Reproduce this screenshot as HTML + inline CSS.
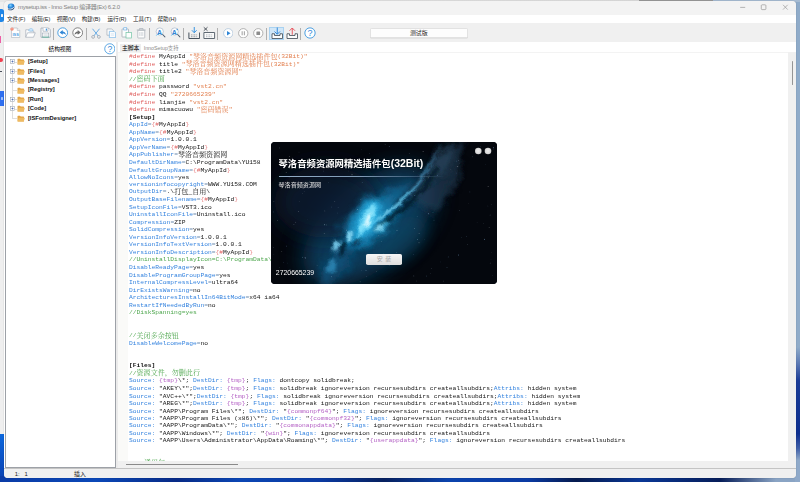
<!DOCTYPE html>
<html lang="zh-CN">
<head>
<meta charset="utf-8">
<title>mysetup.iss - Inno Setup 编译器(Ex) 6.2.0</title>
<style>
*{box-sizing:border-box;margin:0;padding:0}
html,body{width:800px;height:482px;overflow:hidden}
body{position:relative;background:#8fabc9;font-family:"Liberation Sans","Noto Sans CJK SC",sans-serif;color:#000}
.abs{position:absolute}
/* desktop / other windows peeking */
#desk-left{left:0;top:0;width:5px;height:434px;background:#efefef}
#desk-leftblue{left:0;top:434px;width:6px;height:48px;background:linear-gradient(180deg,#0b67dd 0%,#0a52c6 50%,#0a3fae 100%)}
#desk-bottom{left:0;top:476px;width:800px;height:6px;background:linear-gradient(90deg,#0a3ba6 0%,#0b48b8 12%,#072a86 22%,#0b46b4 30%,#0a3aa2 40%,#06205f 48%,#0b43ad 56%,#0a3aa3 66%,#051a4e 72%,#0a3796 80%,#061d59 90%,#8aa4c4 97%)}
#desk-right{left:795px;top:0;width:5px;height:482px;background:linear-gradient(180deg,#8fabc9 0%,#8fabc9 72%,#5a78b4 75.500%,#1a3c98 79%,#0d2f8f 90%,#3f5fa8 93%,#8fa9c9 95.500%,#8fa9c9 100%)}
#top-strip{left:0;top:0;width:800px;height:2px;background:linear-gradient(90deg,#e6e6e6 0,#dcdcdc 639px,#989898 639px,#989898 713px,#a6bbd2 713px)}
/* main window */
#win{left:4px;top:1px;width:792px;height:477px;background:#f0f0f0;border-radius:4px 4px 4px 4px;overflow:hidden;box-shadow:0 0 1px rgba(0,0,0,.35)}
#titlebar{left:0;top:0;width:792px;height:13.5px;background:#f3f3f3}
#title{left:14px;top:2.200px;font-size:6px;line-height:9px;color:#828282;white-space:nowrap;letter-spacing:-0.260px}
#menubar{left:0;top:13.5px;width:792px;height:8.7px;background:#fff}
.mi{position:absolute;top:1px;font-size:5.600px;line-height:7.5px;color:#222;white-space:nowrap}
#toolbar{left:0;top:22.2px;width:792px;height:18.8px;background:#f0f0f0}
.sep{position:absolute;top:4.500px;width:0.600px;height:12px;background:#b0b0b0}
.ico{position:absolute}

/* left panel */
#lp-title{left:0;top:41px;width:112.400px;height:14.500px;background:#fff;font-size:5.700px;line-height:14.500px;color:#000;font-weight:normal}
#lp-title span{position:absolute;left:44.500px;top:0}
#tree{left:1px;top:55.300px;width:110.900px;height:411.300px;background:#fff;border:0.600px solid #9da1a7}
#split{left:112.400px;top:41px;width:1.600px;height:426px;background:#ebebeb}
.ti{position:absolute;left:0;height:9.400px;width:108px;font-size:5.750px;line-height:9.400px;font-weight:bold;color:#111;white-space:nowrap}
.ti .lbl{position:absolute;left:21.900px;top:0}
.ti .fold{position:absolute;left:11.400px;top:1.200px}
.ti .plus{position:absolute;left:3.800px;top:2.200px}
.ti .hl{position:absolute;left:8.800px;top:4.500px;width:2.200px;height:0.400px;background:#dedede}
.ti .hl2{position:absolute;left:6.200px;top:4.500px;width:5.200px;height:0.400px;background:#dedede}
#vline{left:5.800px;top:8.600px;width:0.400px;height:52.500px;background:#dedede}
/* editor */
#tabrow{left:114px;top:41px;width:678px;height:10.300px;background:#fff}
#tab1{left:2px;top:1.700px;width:21.300px;height:8.600px;background:#eeeeee;font-size:5.800px;line-height:8.600px;text-align:center;color:#000;font-weight:normal}
#tab2{left:25.700px;top:1.700px;font-size:5.300px;line-height:8.600px;color:#8a8a8a;white-space:nowrap}
#editor{left:114px;top:51.300px;width:670px;height:408.500px;background:#fff;border-top:0.500px solid #f3f3f3;overflow:hidden}
#gutter{left:0;top:0;width:9.500px;height:409px;background:#fafaf8}
#code{left:11px;top:0.900px;font-family:"Liberation Mono","Noto Serif CJK SC",monospace;font-size:6.270px;line-height:8.976px;white-space:pre;color:#151515;transform:scaleY(0.84);transform-origin:0 0}
#code i{font-style:normal;font-size:7.050px;line-height:0;font-family:"Noto Serif CJK SC","Liberation Mono",monospace;display:inline-block;transform:scaleY(1.190);transform-origin:50% 0}
.d{color:#e0605f}.e{color:#6f8db0}.d2{color:#e77f80}.s{color:#e27f4e}.c{color:#4da64d}.k{color:#3483df}.p{color:#b35fc4}.b{font-weight:bold;color:#111}
#vsb{left:784px;top:51.300px;width:8px;height:409.500px;background:#f0f0f0}
#vsb div{position:absolute;left:3.500px;top:8.500px;width:1.500px;height:24px;background:#959595;border-radius:1px}
#hsb{left:114px;top:459.800px;width:678px;height:7.200px;background:#f0f0f0}
#hsb div{position:absolute;left:7.500px;top:2.800px;width:112px;height:1px;background:#8a8a8a}
/* status */
#status{left:0;top:466.800px;width:792px;height:10.200px;background:#f0f0f0;border-top:0.600px solid #c4c4c4;font-size:5.900px;line-height:10px;color:#222}
#status span{position:absolute;top:0.300px;white-space:pre}

/* splash dialog */
#dlg{left:271px;top:142px;width:225.500px;height:141.500px;border-radius:4px;overflow:hidden;background:#04070d}
#dlg svg.bg{position:absolute;left:0;top:0}
#dlg-title{left:7.500px;top:13px;font-family:"Liberation Sans","Noto Sans CJK SC",sans-serif;font-weight:bold;font-size:9.350px;line-height:16px;color:#fff;white-space:nowrap;text-shadow:0 0 1px rgba(0,0,0,.6)}
#dlg-title b{font-size:10.500px}
#dlg-line{left:7.500px;top:34px;width:166px;height:0.900px;background:linear-gradient(90deg,#93adc5 0%,#7f9bb6 50%,rgba(110,140,170,.5) 80%,rgba(110,140,170,0) 100%)}
#dlg-sub{left:7.500px;top:37.900px;font-size:6.100px;line-height:9px;color:#e6e6e6;white-space:nowrap}
#dlg-qq{left:4.800px;top:126px;font-size:6.900px;line-height:10px;color:#fff;white-space:nowrap}
#dlg-btn{left:94.600px;top:112px;width:36.600px;height:11.200px;border-radius:1.800px;background:linear-gradient(180deg,#f6f6f6,#dedede);text-align:center;font-size:6px;line-height:11px;color:#a9a9a9;letter-spacing:2.500px;text-indent:2.500px}
.dot{position:absolute;top:5.400px;width:6.400px;height:6.400px;border-radius:50%;background:#d9d9d9;box-shadow:inset 0 0 1px #aaa}
</style>
</head>
<body>
<div class="abs" id="desk-left"></div>
<div class="abs" style="left:-3px;top:9px;width:6.700px;height:12.500px;border-radius:2.500px;background:#1e86e8"></div>
<div class="abs" style="left:0.600px;top:13.500px;width:2.600px;height:3px;background:#eaf3fc;border-radius:.5px"></div>
<div class="abs" style="left:0;top:35.500px;width:1.300px;height:7.700px;background:#ec5fa5"></div>
<div class="abs" style="left:-2px;top:57.700px;width:4.600px;height:4.600px;border-radius:50%;background:#ef4050"></div>
<div class="abs" style="left:0;top:70.600px;width:2.300px;height:0.900px;background:#4a4f5a"></div>
<div class="abs" style="left:0;top:91px;width:3.800px;height:14.600px;background:#2f6ff0"></div>
<div class="abs" style="left:0.500px;top:96.500px;width:2.500px;height:3px;background:#9fc0fa;border-radius:.5px"></div>
<div class="abs" id="desk-leftblue"></div>
<div class="abs" id="desk-bottom"></div>
<div class="abs" id="desk-right"></div>
<div class="abs" id="top-strip"></div>

<div class="abs" id="win">
  <div class="abs" id="titlebar">
    <svg class="abs" style="left:3.300px;top:2.300px" width="8.200" height="8.200" viewBox="0 0 16 16"><defs><radialGradient id="gl" cx=".4" cy=".3" r=".8"><stop offset="0" stop-color="#7fd0ff"/><stop offset=".5" stop-color="#1f7fd6"/><stop offset="1" stop-color="#0b3f86"/></radialGradient></defs><circle cx="8" cy="7.500" r="6.500" fill="url(#gl)"/><path d="M1 9.500c3.500 3 9.500 2.500 13.500-3-.5 5.500-8.500 10-13.500 3z" fill="#f4f8fc"/><path d="M1.800 12.600c4 2.300 9.500 1 12.400-3.400" stroke="#2c4058" stroke-width="1" fill="none"/></svg>
    <svg class="abs" style="left:734px;top:2px" width="56" height="10" viewBox="0 0 56 10"><path d="M2.200 4.400h5" stroke="#9a9a9a" stroke-width=".7"/><rect x="23.300" y="1.800" width="4.600" height="4.800" rx=".8" fill="none" stroke="#9a9a9a" stroke-width=".7"/><path d="M45 1.800l4.700 4.800M49.700 1.800L45 6.600" stroke="#9a9a9a" stroke-width=".7"/></svg>
    <div class="abs" id="title">mysetup.iss - Inno Setup 编译器(Ex) 6.2.0</div>
  </div>
  <div class="abs" id="menubar">
    <span class="mi" style="left:3px">文件(F)</span>
    <span class="mi" style="left:27.7px">编辑(E)</span>
    <span class="mi" style="left:52.7px">视图(V)</span>
    <span class="mi" style="left:77.7px">构建(B)</span>
    <span class="mi" style="left:103.5px">运行(R)</span>
    <span class="mi" style="left:129px">工具(T)</span>
    <span class="mi" style="left:153.5px">帮助(H)</span>
  </div>
  <div class="abs" id="toolbar">
    <!-- new file -->
    <svg class="ico" style="left:5.500px;top:4.300px" width="11" height="11.500" viewBox="0 0 22 23"><path d="M3 2h11.500l5 5V21H3z" fill="#fefefe" stroke="#aab3bd" stroke-width="1.200"/><path d="M14.500 2v5h5" fill="#eef1f4" stroke="#aab3bd" stroke-width="1"/><circle cx="4" cy="4.200" r="3.400" fill="#f2836f"/><path d="M4 2.300v2.400M4 5.600v.8" stroke="#fff" stroke-width="1"/><text x="11.300" y="17.800" font-size="7.800" font-weight="bold" text-anchor="middle" fill="#4a9be4" font-family="Liberation Sans, sans-serif">ISS</text></svg>
    <!-- open -->
    <svg class="ico" style="left:20.800px;top:4.800px" width="11" height="10.500" viewBox="0 0 22 21"><path d="M1.500 18.500V3.500h6l2 2.500h8v3.500" fill="#fefefe" stroke="#9aa5b1" stroke-width="1.200"/><path d="M7.500 4.500l2-3h5l1 1.500v3h-8z" fill="#d9ecfb" stroke="#5fa9e6" stroke-width=".9"/><path d="M1.500 18.500L5 9.500h15.500l-3.500 9z" fill="#fefefe" stroke="#9aa5b1" stroke-width="1.200"/></svg>
    <!-- save -->
    <svg class="ico" style="left:35.600px;top:4.300px" width="11" height="11.500" viewBox="0 0 22 23"><path d="M2 2h15l3.500 3.500V20.500H2z" fill="#fefefe" stroke="#8b98a7" stroke-width="1.300"/><path d="M6 2v6.500h10V2" fill="#fefefe" stroke="#8b98a7" stroke-width="1.100"/><rect x="11.600" y="3.200" width="2.400" height="4" fill="#3f97e0"/><rect x="5" y="12" width="12.500" height="8" fill="#fefefe" stroke="#8b98a7" stroke-width="1"/><path d="M7 14.800h8.500M7 17h8.500" stroke="#c5ccd3" stroke-width=".9"/><path d="M4.500 20.300h13.500" stroke="#58b99a" stroke-width="1.600"/></svg>
    <div class="sep" style="left:49.100px"></div>
    <!-- undo -->
    <svg class="ico" style="left:52.900px;top:4.300px" width="11.400" height="11.400" viewBox="0 0 24 24"><circle cx="12" cy="12" r="10.3" fill="#fff" stroke="#2f8fdc" stroke-width="1.8"/><path d="M12 6.5L5.5 11.5 12 16.5v-3c3.5 0 5.5 1.2 6.8 3.6C18.300 12.500 16 9.800 12 9.600z" fill="#2f86d6"/></svg>
    <!-- redo -->
    <svg class="ico" style="left:68px;top:4.300px" width="11.400" height="11.400" viewBox="0 0 24 24"><circle cx="12" cy="12" r="10.3" fill="#fff" stroke="#6d6d6d" stroke-width="1.8"/><path d="M12 6.500L18.500 11.500 12 16.500v-3c-3.500 0-5.500 1.200-6.800 3.600C5.700 12.500 8 9.800 12 9.600z" fill="#6d6d6d"/></svg>
    <div class="sep" style="left:82px"></div>
    <!-- cut -->
    <svg class="ico" style="left:86.5px;top:4.5px" width="10" height="11" viewBox="0 0 20 22"><path d="M3 1.500L14.500 16M17 1.500L5.500 16" stroke="#3f97e0" stroke-width="1.500" fill="none"/><circle cx="4.200" cy="17.800" r="2.700" fill="#fff" stroke="#7d8894" stroke-width="1.300"/><circle cx="15.800" cy="17.800" r="2.700" fill="#fff" stroke="#7d8894" stroke-width="1.300"/></svg>
    <!-- copy -->
    <svg class="ico" style="left:101.500px;top:4.600px" width="10.600" height="10.600" viewBox="0 0 22 22"><path d="M2 2h10l3 3v10H2z" fill="#fdfdfd" stroke="#9aa3ad" stroke-width="1.300"/><path d="M7 7h10l3 3v10H7z" fill="#fdfdfd" stroke="#6aaee6" stroke-width="1.400"/><path d="M10 12h7M10 15h7" stroke="#b9d6ef" stroke-width="1"/></svg>
    <!-- paste -->
    <svg class="ico" style="left:116.500px;top:4px" width="11.500" height="12" viewBox="0 0 23 24"><rect x="2" y="4" width="13" height="16" rx="1" fill="#fdfdfd" stroke="#9aa3ad" stroke-width="1.400"/><rect x="5.500" y="1.500" width="6" height="4.500" fill="#fdfdfd" stroke="#6aaee6" stroke-width="1.300"/><rect x="10" y="11" width="11" height="11" fill="#fdfdfd" stroke="#6fc3a4" stroke-width="1.400"/></svg>
    <!-- delete -->
    <svg class="ico" style="left:132px;top:4px" width="10.500" height="12" viewBox="0 0 21 24"><path d="M3.500 6.500h14v14.500a1 1 0 0 1-1 1h-12a1 1 0 0 1-1-1z" fill="#fdfdfd" stroke="#a5adb6" stroke-width="1.400"/><path d="M1.500 6h18M7 5.500V3h7v2.500" fill="none" stroke="#a5adb6" stroke-width="1.400"/><path d="M7.500 10v8M10.500 10v8M13.500 10v8" stroke="#b7bec6" stroke-width="1.100"/></svg>
    <div class="sep" style="left:145.400px"></div>
    <!-- find -->
    <svg class="ico" style="left:150.500px;top:4.300px" width="11" height="11.500" viewBox="0 0 22 23"><circle cx="9.500" cy="9" r="7.300" fill="#fdfdfd" stroke="#a3b4c6" stroke-width="1.300"/><path d="M14.800 14.500l5.700 6" stroke="#45566a" stroke-width="2.100"/><text x="9.300" y="15.800" font-size="14" font-weight="bold" text-anchor="middle" fill="#2f86d6" font-family="Liberation Sans, sans-serif">A</text><path d="M2 18l3-4" stroke="#6fc7f2" stroke-width="1.300"/></svg>
    <!-- find next -->
    <svg class="ico" style="left:165.700px;top:4.300px" width="11" height="11.500" viewBox="0 0 22 23"><circle cx="9.500" cy="9" r="7.300" fill="#fdfdfd" stroke="#a3b4c6" stroke-width="1.300"/><path d="M14.800 14.500l5.700 6" stroke="#45566a" stroke-width="2.100"/><text x="8.800" y="15.800" font-size="14" font-weight="bold" text-anchor="middle" fill="#2f86d6" font-family="Liberation Sans, sans-serif">A</text><path d="M2 18l3-4" stroke="#6fc7f2" stroke-width="1.300"/><path d="M14.500 3.500v3M13 5h3" stroke="#2f86d6" stroke-width="1"/></svg>
    <div class="sep" style="left:179.100px"></div>
    <!-- compile -->
    <svg class="ico" style="left:183.600px;top:3.300px" width="12.500" height="13.500" viewBox="0 0 25 27"><path d="M12.500 2v11M7.800 8.500l4.700 5 4.700-5" fill="none" stroke="#2f8fe0" stroke-width="1.900"/><path d="M1.800 13v12h21.400V13" fill="none" stroke="#3c4854" stroke-width="1.900"/><path d="M6 17.800h13" stroke="#6d7883" stroke-width="1.500" stroke-dasharray="1.800 1.400"/><path d="M6 21.400h13" stroke="#6d7883" stroke-width="1.500" stroke-dasharray="1.800 1.400"/></svg>
    <!-- stop compile -->
    <svg class="ico" style="left:199px;top:3.300px" width="12.500" height="13.500" viewBox="0 0 25 27"><path d="M1.500 2.500l7.500 7M9 2.500l-7.500 7" stroke="#2d3640" stroke-width="1.600"/><path d="M1.800 13h21.400v12H1.800z" fill="#fbfbfb" stroke="#56616c" stroke-width="1.900"/><path d="M6 17.800h13" stroke="#8d97a1" stroke-width="1.500" stroke-dasharray="1.800 1.400"/><path d="M6 21.400h13" stroke="#8d97a1" stroke-width="1.500" stroke-dasharray="1.800 1.400"/></svg>
    <div class="sep" style="left:213.400px"></div>
    <!-- play -->
    <svg class="ico" style="left:218.700px;top:4.800px" width="10.500" height="10.500" viewBox="0 0 21 21"><circle cx="10.500" cy="10.500" r="9.300" fill="#fff" stroke="#9fb9d3" stroke-width="1.300"/><path d="M8 6l7 4.500-7 4.500z" fill="#2f86d6"/></svg>
    <!-- pause -->
    <svg class="ico" style="left:234.200px;top:4.800px" width="10.500" height="10.500" viewBox="0 0 21 21"><circle cx="10.500" cy="10.500" r="9.300" fill="#fff" stroke="#8d8d8d" stroke-width="1.300"/><path d="M8.300 6.500v8M12.700 6.500v8" stroke="#8d8d8d" stroke-width="1.700"/></svg>
    <!-- stop -->
    <svg class="ico" style="left:249.300px;top:4.800px" width="10.500" height="10.500" viewBox="0 0 21 21"><circle cx="10.500" cy="10.500" r="9.300" fill="#fff" stroke="#8d8d8d" stroke-width="1.300"/><rect x="6.800" y="6.800" width="7.400" height="7.400" rx="1" fill="#8d8d8d"/></svg>
    <div class="sep" style="left:262.200px"></div>
    <!-- highlighted -->
    <div class="abs" style="left:265.300px;top:3.500px;width:14.700px;height:13.800px;background:#d1e7f8;border:0.600px solid #a9d2f1"></div>
    <svg class="ico" style="left:266.500px;top:4px" width="12.500" height="12.500" viewBox="0 0 25 25"><path d="M12.500 1v13M7 9l5.500 5.500L18 9" fill="none" stroke="#2f86d6" stroke-width="1.900"/><path d="M2 13.500h5v3.500h11v-3.500h5V23H2z" fill="#fdfdfd" stroke="#3c4650" stroke-width="1.600"/></svg>
    <svg class="ico" style="left:282px;top:4px" width="12.500" height="12.500" viewBox="0 0 25 25"><path d="M2 13.500h5v3.500h11v-3.500h5V23H2z" fill="#fdfdfd" stroke="#3c4650" stroke-width="1.600"/><path d="M12.500 15.500V2M7 7.500L12.500 2 18 7.500" fill="none" stroke="#e8505b" stroke-width="1.900"/></svg>
    <div class="sep" style="left:296.300px"></div>
    <!-- help -->
    <svg class="ico" style="left:300px;top:4px" width="12" height="12" viewBox="0 0 24 24"><circle cx="12" cy="12" r="10.300" fill="#fff" stroke="#2f8fdc" stroke-width="1.700"/><text x="12" y="18.300" font-size="18" text-anchor="middle" fill="#2f86d6" font-family="Liberation Sans, sans-serif">?</text></svg>
    <!-- text field -->
    <div class="abs" style="left:366px;top:4.900px;width:97.500px;height:9.600px;background:#fdfdfd;border:0.600px solid #e2e2e2;border-radius:1.500px;box-shadow:0 0.500px 0 #d5d5d5;text-align:center;font-size:5.900px;line-height:8.600px;color:#222">测试版</div>
  </div>
<div class="abs" id="lp-title"><span>结构视图</span></div>
<svg class="abs" style="left:99.800px;top:42.200px" width="11.600" height="11.600" viewBox="0 0 24 24"><circle cx="12" cy="12" r="10.500" fill="#fff" stroke="#2f8fdc" stroke-width="1.600"/><text x="12" y="18.300" font-size="18" text-anchor="middle" fill="#2f86d6" font-family="Liberation Sans, sans-serif">?</text></svg>
<div class="abs" id="split"></div><div class="abs" id="lpbg" style="left:0;top:55px;width:112.400px;height:412px;background:#fff"></div><div class="abs" id="tree"><div class="abs" id="vline"></div>
<div class="ti" style="top:-0.10px"><svg class="plus" width="5" height="5" viewBox="0 0 10 10"><rect x=".8" y=".8" width="8.400" height="8.400" fill="#fff" stroke="#8f9aa6" stroke-width="1"/><path d="M2.800 5h4.400M5 2.800v4.400" stroke="#2c4fa0" stroke-width="1.100"/></svg><span class="hl"></span><svg class="fold" width="8" height="7" viewBox="0 0 16 14"><path d="M1 2.500a1 1 0 0 1 1-1h4l1.500 1.500H13a1 1 0 0 1 1 1V12a1 1 0 0 1-1 1H2a1 1 0 0 1-1-1z" fill="#e3a545"/><path d="M1.200 12.500L3.200 6a1 1 0 0 1 1-.700H15a.600.600 0 0 1 .600.800L13.700 12.500a1 1 0 0 1-1 .600H2z" fill="#efbb62"/></svg><span class="lbl">[Setup]</span></div>
<div class="ti" style="top:9.32px"><svg class="plus" width="5" height="5" viewBox="0 0 10 10"><rect x=".8" y=".8" width="8.400" height="8.400" fill="#fff" stroke="#8f9aa6" stroke-width="1"/><path d="M2.800 5h4.400M5 2.800v4.400" stroke="#2c4fa0" stroke-width="1.100"/></svg><span class="hl"></span><svg class="fold" width="8" height="7" viewBox="0 0 16 14"><path d="M1 2.500a1 1 0 0 1 1-1h4l1.500 1.500H13a1 1 0 0 1 1 1V12a1 1 0 0 1-1 1H2a1 1 0 0 1-1-1z" fill="#e3a545"/><path d="M1.200 12.500L3.200 6a1 1 0 0 1 1-.700H15a.600.600 0 0 1 .600.800L13.700 12.500a1 1 0 0 1-1 .600H2z" fill="#efbb62"/></svg><span class="lbl">[Files]</span></div>
<div class="ti" style="top:18.74px"><svg class="plus" width="5" height="5" viewBox="0 0 10 10"><rect x=".8" y=".8" width="8.400" height="8.400" fill="#fff" stroke="#8f9aa6" stroke-width="1"/><path d="M2.800 5h4.400M5 2.800v4.400" stroke="#2c4fa0" stroke-width="1.100"/></svg><span class="hl"></span><svg class="fold" width="8" height="7" viewBox="0 0 16 14"><path d="M1 2.500a1 1 0 0 1 1-1h4l1.500 1.500H13a1 1 0 0 1 1 1V12a1 1 0 0 1-1 1H2a1 1 0 0 1-1-1z" fill="#e3a545"/><path d="M1.200 12.500L3.200 6a1 1 0 0 1 1-.700H15a.600.600 0 0 1 .600.800L13.700 12.500a1 1 0 0 1-1 .600H2z" fill="#efbb62"/></svg><span class="lbl">[Messages]</span></div>
<div class="ti" style="top:28.16px"><span class="hl2"></span><svg class="fold" width="8" height="7" viewBox="0 0 16 14"><path d="M1 2.500a1 1 0 0 1 1-1h4l1.500 1.500H13a1 1 0 0 1 1 1V12a1 1 0 0 1-1 1H2a1 1 0 0 1-1-1z" fill="#e3a545"/><path d="M1.200 12.500L3.200 6a1 1 0 0 1 1-.700H15a.600.600 0 0 1 .600.800L13.700 12.500a1 1 0 0 1-1 .600H2z" fill="#efbb62"/></svg><span class="lbl">[Registry]</span></div>
<div class="ti" style="top:37.58px"><svg class="plus" width="5" height="5" viewBox="0 0 10 10"><rect x=".8" y=".8" width="8.400" height="8.400" fill="#fff" stroke="#8f9aa6" stroke-width="1"/><path d="M2.800 5h4.400M5 2.800v4.400" stroke="#2c4fa0" stroke-width="1.100"/></svg><span class="hl"></span><svg class="fold" width="8" height="7" viewBox="0 0 16 14"><path d="M1 2.500a1 1 0 0 1 1-1h4l1.500 1.500H13a1 1 0 0 1 1 1V12a1 1 0 0 1-1 1H2a1 1 0 0 1-1-1z" fill="#e3a545"/><path d="M1.200 12.500L3.200 6a1 1 0 0 1 1-.700H15a.600.600 0 0 1 .600.800L13.700 12.500a1 1 0 0 1-1 .600H2z" fill="#efbb62"/></svg><span class="lbl">[Run]</span></div>
<div class="ti" style="top:47.00px"><svg class="plus" width="5" height="5" viewBox="0 0 10 10"><rect x=".8" y=".8" width="8.400" height="8.400" fill="#fff" stroke="#8f9aa6" stroke-width="1"/><path d="M2.800 5h4.400M5 2.800v4.400" stroke="#2c4fa0" stroke-width="1.100"/></svg><span class="hl"></span><svg class="fold" width="8" height="7" viewBox="0 0 16 14"><path d="M1 2.500a1 1 0 0 1 1-1h4l1.500 1.500H13a1 1 0 0 1 1 1V12a1 1 0 0 1-1 1H2a1 1 0 0 1-1-1z" fill="#e3a545"/><path d="M1.200 12.500L3.200 6a1 1 0 0 1 1-.700H15a.600.600 0 0 1 .600.800L13.700 12.500a1 1 0 0 1-1 .600H2z" fill="#efbb62"/></svg><span class="lbl">[Code]</span></div>
<div class="ti" style="top:56.42px"><span class="hl2"></span><svg class="fold" width="8" height="7" viewBox="0 0 16 14"><path d="M1 2.500a1 1 0 0 1 1-1h4l1.500 1.500H13a1 1 0 0 1 1 1V12a1 1 0 0 1-1 1H2a1 1 0 0 1-1-1z" fill="#e3a545"/><path d="M1.200 12.500L3.200 6a1 1 0 0 1 1-.700H15a.600.600 0 0 1 .600.800L13.700 12.500a1 1 0 0 1-1 .600H2z" fill="#efbb62"/></svg><span class="lbl">[ISFormDesigner]</span></div>
</div>
<div class="abs" id="tabrow"><div class="abs" id="tab1">主脚本</div><div class="abs" id="tab2">InnoSetup支持</div></div>
<div class="abs" id="editor"><div class="abs" id="gutter"></div><div class="abs" id="code"><span class="d">#define</span> MyAppId <span class="s">"<i>琴洛音频资源网精选插件包</i>(32Bit)"</span>
<span class="d">#define</span> title <span class="s">"<i>琴洛音频资源网精选插件包</i>(32Bit)"</span>
<span class="d">#define</span> title2 <span class="s">"<i>琴洛音频资源网</i>"</span>
<span class="c">//<i>密码下面</i></span>
<span class="d">#define</span> password <span class="s">"vst2.cn"</span>
<span class="d">#define</span> QQ <span class="s">"2720665239"</span>
<span class="d">#define</span> lianjie <span class="s">"vst2.cn"</span>
<span class="d">#define</span> mimacuowu <span class="s">"<i>密码错误</i>"</span>
<span class="b">[Setup]</span>
<span class="k">AppId</span><span class="e">=</span><span class="d2">{</span><span class="d">#</span>MyAppId<span class="d2">}</span>
<span class="k">AppName</span><span class="e">=</span><span class="d2">{</span><span class="d">#</span>MyAppId<span class="d2">}</span>
<span class="k">AppVersion</span><span class="e">=</span>1.0.0.1
<span class="k">AppVerName</span><span class="e">=</span><span class="d2">{</span><span class="d">#</span>MyAppId<span class="d2">}</span>
<span class="k">AppPublisher</span><span class="e">=</span><i>琴洛音频资源网</i>
<span class="k">DefaultDirName</span><span class="e">=</span>C:\ProgramData\YU158
<span class="k">DefaultGroupName</span><span class="e">=</span><span class="d2">{</span><span class="d">#</span>MyAppId<span class="d2">}</span>
<span class="k">AllowNoIcons</span><span class="e">=</span>yes
<span class="k">versioninfocopyright</span><span class="e">=</span>WWW.YU158.COM
<span class="k">OutputDir</span><span class="e">=</span>.\<i>打包_自用</i>\
<span class="k">OutputBaseFilename</span><span class="e">=</span><span class="d2">{</span><span class="d">#</span>MyAppId<span class="d2">}</span>
<span class="k">SetupIconFile</span><span class="e">=</span>VST3.ico
<span class="k">UninstallIconFile</span><span class="e">=</span>Uninstall.ico
<span class="k">Compression</span><span class="e">=</span>ZIP
<span class="k">SolidCompression</span><span class="e">=</span>yes
<span class="k">VersionInfoVersion</span><span class="e">=</span>1.0.0.1
<span class="k">VersionInfoTextVersion</span><span class="e">=</span>1.0.0.1
<span class="k">VersionInfoDescription</span><span class="e">=</span><span class="d2">{</span><span class="d">#</span>MyAppId<span class="d2">}</span>
<span class="c">//UninstallDisplayIcon=C:\ProgramData\YU158\Uninstall.ico</span>
<span class="k">DisableReadyPage</span><span class="e">=</span>yes
<span class="k">DisableProgramGroupPage</span><span class="e">=</span>yes
<span class="k">InternalCompressLevel</span><span class="e">=</span>ultra64
<span class="k">DirExistsWarning</span><span class="e">=</span>no
<span class="k">ArchitecturesInstallIn64BitMode</span><span class="e">=</span>x64 ia64
<span class="k">RestartIfNeededByRun</span><span class="e">=</span>no
<span class="c">//DiskSpanning=yes</span>


<span class="c">//<i>关闭多余按钮</i></span>
<span class="k">DisableWelcomePage</span><span class="e">=</span>no


<span class="b">[Files]</span>
<span class="c">//<i>资源文件，勿删此行</i></span>
<span class="k">Source:</span> <span class="p">{tmp}</span>\*; <span class="k">DestDir:</span> <span class="p">{tmp}</span>; <span class="k">Flags:</span> dontcopy solidbreak;
<span class="k">Source:</span> "AKEY\*";<span class="k">DestDir:</span> <span class="p">{tmp}</span>; <span class="k">Flags:</span> solidbreak ignoreversion recursesubdirs createallsubdirs;<span class="k">Attribs:</span> hidden system
<span class="k">Source:</span> "AVC++\*";<span class="k">DestDir:</span> <span class="p">{tmp}</span>; <span class="k">Flags:</span> solidbreak ignoreversion recursesubdirs createallsubdirs;<span class="k">Attribs:</span> hidden system
<span class="k">Source:</span> "AREG\*";<span class="k">DestDir:</span> <span class="p">{tmp}</span>; <span class="k">Flags:</span> solidbreak ignoreversion recursesubdirs createallsubdirs;<span class="k">Attribs:</span> hidden system
<span class="k">Source:</span> "AAPP\Program Files\*"; <span class="k">DestDir:</span> "<span class="p">{commonpf64}</span>"; <span class="k">Flags:</span> ignoreversion recursesubdirs createallsubdirs
<span class="k">Source:</span> "AAPP\Program Files (x86)\*"; <span class="k">DestDir:</span> "<span class="p">{commonpf32}</span>"; <span class="k">Flags:</span> ignoreversion recursesubdirs createallsubdirs
<span class="k">Source:</span> "AAPP\ProgramData\*"; <span class="k">DestDir:</span> "<span class="p">{commonappdata}</span>"; <span class="k">Flags:</span> ignoreversion recursesubdirs createallsubdirs
<span class="k">Source:</span> "AAPP\Windows\*"; <span class="k">DestDir:</span> "<span class="p">{win}</span>"; <span class="k">Flags:</span> ignoreversion recursesubdirs createallsubdirs
<span class="k">Source:</span> "AAPP\Users\Administrator\AppData\Roaming\*"; <span class="k">DestDir:</span> "<span class="p">{userappdata}</span>"; <span class="k">Flags:</span> ignoreversion recursesubdirs createallsubdirs


<span class="c">  //<i>通用包</i></span></div></div>
<div class="abs" id="vsb"><div></div></div>
<div class="abs" id="hsb"><div></div></div>
<div class="abs" id="status"><span style="left:10.800px">1:   1</span><span style="left:70px">插入</span></div>
</div>
<div class="abs" id="dlg">
<svg class="bg" width="226" height="142" viewBox="0 0 226 142">
<defs>
<filter id="f12" x="-50%" y="-50%" width="200%" height="200%"><feGaussianBlur stdDeviation="11"/></filter>
<filter id="f8" x="-50%" y="-50%" width="200%" height="200%"><feGaussianBlur stdDeviation="7"/></filter>
<filter id="f6" x="-50%" y="-50%" width="200%" height="200%"><feGaussianBlur stdDeviation="5"/></filter>
<filter id="f4" x="-50%" y="-50%" width="200%" height="200%"><feGaussianBlur stdDeviation="3.200"/></filter>
<filter id="f2" x="-50%" y="-50%" width="200%" height="200%"><feGaussianBlur stdDeviation="1.600"/></filter>
<filter id="f1" x="-50%" y="-50%" width="200%" height="200%"><feGaussianBlur stdDeviation="0.900"/></filter>
<filter id="tb" x="-10%" y="-10%" width="120%" height="120%"><feTurbulence type="fractalNoise" baseFrequency="0.045" numOctaves="4" seed="3" result="n"/><feDisplacementMap in="SourceGraphic" in2="n" scale="18" xChannelSelector="R" yChannelSelector="G"/></filter>
<filter id="tb2" x="-10%" y="-10%" width="120%" height="120%"><feTurbulence type="fractalNoise" baseFrequency="0.1" numOctaves="3" seed="11" result="n"/><feDisplacementMap in="SourceGraphic" in2="n" scale="7" xChannelSelector="R" yChannelSelector="G"/></filter>
<linearGradient id="rg" gradientUnits="userSpaceOnUse" x1="98" y1="84" x2="169" y2="4"><stop offset="0" stop-color="#9be6fb"/><stop offset=".4" stop-color="#5fc4ea"/><stop offset=".7" stop-color="#3f88b2" stop-opacity=".8"/><stop offset="1" stop-color="#33607f" stop-opacity=".3"/></linearGradient>
</defs>
<rect width="226" height="142" fill="#04070d"/>
<ellipse cx="98" cy="84" rx="78" ry="42" transform="rotate(-40 98 84)" fill="#0c3f60" opacity=".95" filter="url(#f12)"/>
<ellipse cx="55" cy="60" rx="52" ry="36" fill="#0a1c33" opacity=".8" filter="url(#f12)"/>
<ellipse cx="128" cy="98" rx="30" ry="18" transform="rotate(-35 128 98)" fill="#0e4868" opacity=".5" filter="url(#f8)"/>
<g filter="url(#tb)">
<path d="M138 54L158 25 169 2 196 2 186 40 165 72 150 64z" fill="#223d55" opacity=".65" filter="url(#f4)"/>
<path d="M152 36L168 6 184 4 174 34z" fill="#2f4f6a" opacity=".5" filter="url(#f4)"/>
<path d="M92 90L75 105 62 125 56 142" fill="none" stroke="#0f5882" stroke-width="15" stroke-linecap="round" opacity=".75" filter="url(#f6)"/>
<ellipse cx="98" cy="78" rx="30" ry="18" transform="rotate(-40 98 78)" fill="#1686b8" opacity=".95" filter="url(#f6)"/>
<ellipse cx="120" cy="58" rx="22" ry="9" transform="rotate(-38 120 58)" fill="#14709e" opacity=".7" filter="url(#f6)"/>
</g>
<g filter="url(#tb2)">
<path d="M104 88L124 73 142 58 156 42 166 26" fill="none" stroke="#051220" stroke-width="4.500" stroke-linecap="round" opacity=".7" filter="url(#f2)"/>
<path d="M98 84L118 69 136 54 150 38 160 22 169 4" fill="none" stroke="url(#rg)" stroke-width="2.800" stroke-linecap="round" opacity=".95" filter="url(#f1)"/>
<path d="M82 96L86 78 94 64 106 56 110 70 104 84 94 95z" fill="#2fb4e6" opacity=".95" filter="url(#f4)"/>
<path d="M86 92L90 78 96 67 103 61 105 72 100 83 93 91z" fill="#7fe0fa" opacity=".95" filter="url(#f2)"/>
<path d="M92 84L95 76 99 70 100 76 96 83z" fill="#e4fbff" opacity=".9" filter="url(#f1)"/>
<ellipse cx="109" cy="86" rx="6" ry="2.200" transform="rotate(-28 109 86)" fill="#e6fbff" opacity=".9" filter="url(#f1)"/>
<ellipse cx="110" cy="86" rx="10" ry="4" transform="rotate(-28 110 86)" fill="#4cc4ee" opacity=".6" filter="url(#f2)"/>
<ellipse cx="78" cy="95" rx="2.500" ry="6.500" transform="rotate(12 78 95)" fill="#8fe0fb" opacity=".9" filter="url(#f1)"/>
<ellipse cx="65" cy="104" rx="4" ry="6" transform="rotate(25 65 104)" fill="#7fd6f7" opacity=".85" filter="url(#f2)"/>
<ellipse cx="60" cy="124" rx="4" ry="7" transform="rotate(15 60 124)" fill="#3aa2d4" opacity=".6" filter="url(#f2)"/>
<ellipse cx="72" cy="108" rx="3" ry="7" transform="rotate(10 72 108)" fill="#061523" opacity=".7" filter="url(#f2)"/>
<ellipse cx="86" cy="100" rx="3" ry="7" transform="rotate(30 86 100)" fill="#07182a" opacity=".55" filter="url(#f2)"/>
</g>
<g><circle cx="73.9" cy="22.8" r="0.25" fill="#9fd0ff" opacity="0.29"/><circle cx="22.9" cy="82.4" r="0.45" fill="#cfe6ff" opacity="0.37"/><circle cx="98.3" cy="11.6" r="0.25" fill="#cfe6ff" opacity="0.55"/><circle cx="185.6" cy="19.1" r="0.30" fill="#9fd0ff" opacity="0.60"/><circle cx="212.4" cy="81.6" r="0.35" fill="#cfe6ff" opacity="0.28"/><circle cx="12.3" cy="120.5" r="0.30" fill="#9fd0ff" opacity="0.48"/><circle cx="28.1" cy="44.6" r="0.30" fill="#9fd0ff" opacity="0.31"/><circle cx="143.8" cy="53.4" r="0.45" fill="#9fd0ff" opacity="0.64"/><circle cx="15.2" cy="30.4" r="0.45" fill="#ffffff" opacity="0.49"/><circle cx="105.4" cy="129.4" r="0.30" fill="#cfe6ff" opacity="0.41"/><circle cx="157.2" cy="35.7" r="0.45" fill="#ffffff" opacity="0.42"/><circle cx="196.3" cy="102.7" r="0.30" fill="#cfe6ff" opacity="0.58"/><circle cx="28.2" cy="59.7" r="0.30" fill="#ffffff" opacity="0.33"/><circle cx="95.6" cy="134.8" r="0.25" fill="#9fd0ff" opacity="0.67"/><circle cx="177.2" cy="114.9" r="0.30" fill="#9fd0ff" opacity="0.63"/><circle cx="112.3" cy="112.0" r="0.25" fill="#ffffff" opacity="0.71"/><circle cx="107.2" cy="93.7" r="0.25" fill="#ffffff" opacity="0.65"/><circle cx="145.7" cy="139.0" r="0.35" fill="#ffffff" opacity="0.41"/><circle cx="198.9" cy="49.9" r="0.35" fill="#9fd0ff" opacity="0.45"/><circle cx="28.0" cy="10.1" r="0.30" fill="#cfe6ff" opacity="0.32"/><circle cx="90.3" cy="128.5" r="0.35" fill="#ffffff" opacity="0.29"/><circle cx="91.2" cy="40.3" r="0.30" fill="#9fd0ff" opacity="0.70"/><circle cx="63.8" cy="59.3" r="0.30" fill="#ffffff" opacity="0.63"/><circle cx="214.6" cy="22.8" r="0.30" fill="#9fd0ff" opacity="0.33"/><circle cx="53.8" cy="68.9" r="0.45" fill="#ffffff" opacity="0.35"/><circle cx="2.9" cy="59.8" r="0.30" fill="#ffffff" opacity="0.59"/><circle cx="213.6" cy="97.3" r="0.45" fill="#9fd0ff" opacity="0.77"/><circle cx="152.1" cy="9.5" r="0.45" fill="#ffffff" opacity="0.47"/><circle cx="89.5" cy="68.5" r="0.35" fill="#cfe6ff" opacity="0.28"/><circle cx="220.6" cy="62.8" r="0.25" fill="#cfe6ff" opacity="0.44"/><circle cx="24.7" cy="80.2" r="0.45" fill="#ffffff" opacity="0.31"/><circle cx="138.2" cy="11.7" r="0.30" fill="#cfe6ff" opacity="0.59"/><circle cx="142.8" cy="133.9" r="0.45" fill="#cfe6ff" opacity="0.45"/><circle cx="27.6" cy="69.4" r="0.35" fill="#ffffff" opacity="0.51"/><circle cx="21.1" cy="16.1" r="0.30" fill="#ffffff" opacity="0.66"/><circle cx="186.0" cy="24.3" r="0.25" fill="#9fd0ff" opacity="0.36"/><circle cx="82.3" cy="97.2" r="0.25" fill="#ffffff" opacity="0.67"/><circle cx="219.2" cy="121.1" r="0.30" fill="#cfe6ff" opacity="0.54"/><circle cx="81.0" cy="32.7" r="0.45" fill="#ffffff" opacity="0.68"/><circle cx="143.3" cy="86.6" r="0.30" fill="#ffffff" opacity="0.69"/><circle cx="166.3" cy="33.3" r="0.45" fill="#9fd0ff" opacity="0.52"/><circle cx="8.4" cy="5.9" r="0.30" fill="#cfe6ff" opacity="0.51"/><circle cx="155.7" cy="134.0" r="0.35" fill="#9fd0ff" opacity="0.69"/><circle cx="221.3" cy="133.8" r="0.30" fill="#cfe6ff" opacity="0.29"/><circle cx="52.4" cy="29.1" r="0.30" fill="#9fd0ff" opacity="0.52"/><circle cx="188.6" cy="68.2" r="0.30" fill="#cfe6ff" opacity="0.69"/><circle cx="187.3" cy="18.5" r="0.35" fill="#cfe6ff" opacity="0.68"/><circle cx="108.1" cy="26.6" r="0.30" fill="#9fd0ff" opacity="0.30"/><circle cx="89.9" cy="57.4" r="0.25" fill="#cfe6ff" opacity="0.65"/><circle cx="222.5" cy="5.8" r="0.45" fill="#9fd0ff" opacity="0.75"/><circle cx="34.5" cy="116.1" r="0.35" fill="#ffffff" opacity="0.61"/><circle cx="36.6" cy="77.7" r="0.25" fill="#9fd0ff" opacity="0.26"/><circle cx="146.2" cy="74.7" r="0.30" fill="#cfe6ff" opacity="0.49"/><circle cx="185.4" cy="31.1" r="0.30" fill="#9fd0ff" opacity="0.37"/><circle cx="55.4" cy="82.9" r="0.30" fill="#cfe6ff" opacity="0.55"/><circle cx="15.5" cy="104.1" r="0.35" fill="#9fd0ff" opacity="0.61"/><circle cx="95.4" cy="128.6" r="0.45" fill="#cfe6ff" opacity="0.32"/><circle cx="118.2" cy="4.6" r="0.35" fill="#9fd0ff" opacity="0.68"/><circle cx="2.9" cy="112.3" r="0.30" fill="#9fd0ff" opacity="0.33"/><circle cx="163.0" cy="78.8" r="0.30" fill="#9fd0ff" opacity="0.63"/><circle cx="125.3" cy="110.2" r="0.25" fill="#cfe6ff" opacity="0.74"/><circle cx="57.2" cy="40.2" r="0.25" fill="#9fd0ff" opacity="0.53"/><circle cx="8.2" cy="125.4" r="0.25" fill="#9fd0ff" opacity="0.49"/><circle cx="218.1" cy="85.6" r="0.30" fill="#ffffff" opacity="0.63"/><circle cx="114.8" cy="113.4" r="0.45" fill="#9fd0ff" opacity="0.77"/><circle cx="118.2" cy="122.9" r="0.30" fill="#cfe6ff" opacity="0.76"/><circle cx="188.5" cy="20.9" r="0.25" fill="#ffffff" opacity="0.47"/><circle cx="18.1" cy="35.2" r="0.25" fill="#ffffff" opacity="0.37"/><circle cx="176.0" cy="125.8" r="0.30" fill="#9fd0ff" opacity="0.77"/><circle cx="148.6" cy="21.7" r="0.30" fill="#cfe6ff" opacity="0.78"/><circle cx="167.8" cy="15.0" r="0.35" fill="#9fd0ff" opacity="0.34"/><circle cx="186.8" cy="24.3" r="0.35" fill="#ffffff" opacity="0.80"/><circle cx="77.3" cy="29.0" r="0.30" fill="#ffffff" opacity="0.30"/><circle cx="6.3" cy="78.5" r="0.35" fill="#ffffff" opacity="0.64"/><circle cx="75.6" cy="88.1" r="0.45" fill="#cfe6ff" opacity="0.78"/><circle cx="220.7" cy="110.8" r="0.25" fill="#ffffff" opacity="0.30"/><circle cx="10.8" cy="109.5" r="0.30" fill="#ffffff" opacity="0.67"/><circle cx="190.6" cy="95.3" r="0.30" fill="#9fd0ff" opacity="0.47"/><circle cx="206.1" cy="80.7" r="0.30" fill="#cfe6ff" opacity="0.30"/><circle cx="179.5" cy="27.3" r="0.25" fill="#cfe6ff" opacity="0.40"/><circle cx="142.8" cy="112.6" r="0.25" fill="#cfe6ff" opacity="0.58"/><circle cx="16.8" cy="121.1" r="0.35" fill="#9fd0ff" opacity="0.26"/><circle cx="94.7" cy="128.3" r="0.45" fill="#9fd0ff" opacity="0.32"/><circle cx="159.5" cy="131.5" r="0.30" fill="#cfe6ff" opacity="0.39"/><circle cx="46.8" cy="45.1" r="0.30" fill="#cfe6ff" opacity="0.54"/><circle cx="66.4" cy="71.0" r="0.30" fill="#cfe6ff" opacity="0.40"/><circle cx="222.8" cy="7.1" r="0.25" fill="#9fd0ff" opacity="0.65"/><circle cx="219.1" cy="73.0" r="0.30" fill="#cfe6ff" opacity="0.76"/><circle cx="148.1" cy="91.7" r="0.35" fill="#ffffff" opacity="0.55"/><circle cx="217.4" cy="44.5" r="0.30" fill="#ffffff" opacity="0.79"/><circle cx="46.1" cy="123.7" r="0.30" fill="#ffffff" opacity="0.47"/><circle cx="220.0" cy="117.5" r="0.25" fill="#9fd0ff" opacity="0.29"/><circle cx="197.3" cy="61.4" r="0.25" fill="#ffffff" opacity="0.30"/><circle cx="195.3" cy="94.5" r="0.30" fill="#9fd0ff" opacity="0.58"/><circle cx="67.1" cy="65.4" r="0.30" fill="#cfe6ff" opacity="0.40"/><circle cx="60.4" cy="134.7" r="0.45" fill="#cfe6ff" opacity="0.43"/><circle cx="216.4" cy="44.7" r="0.30" fill="#ffffff" opacity="0.35"/><circle cx="86.7" cy="67.5" r="0.45" fill="#cfe6ff" opacity="0.61"/><circle cx="114.1" cy="2.7" r="0.30" fill="#cfe6ff" opacity="0.70"/><circle cx="90.7" cy="7.8" r="0.25" fill="#9fd0ff" opacity="0.41"/><circle cx="53.7" cy="82.8" r="0.45" fill="#cfe6ff" opacity="0.72"/><circle cx="148.0" cy="100.8" r="0.45" fill="#ffffff" opacity="0.46"/><circle cx="162.0" cy="70.2" r="0.30" fill="#9fd0ff" opacity="0.65"/><circle cx="34.1" cy="115.8" r="0.45" fill="#9fd0ff" opacity="0.60"/><circle cx="157.6" cy="71.8" r="0.45" fill="#9fd0ff" opacity="0.66"/><circle cx="187.4" cy="113.0" r="0.45" fill="#9fd0ff" opacity="0.69"/><circle cx="153.6" cy="97.7" r="0.30" fill="#cfe6ff" opacity="0.30"/><circle cx="31.5" cy="51.8" r="0.25" fill="#ffffff" opacity="0.46"/><circle cx="126.0" cy="88.6" r="0.45" fill="#ffffff" opacity="0.62"/><circle cx="60.6" cy="65.1" r="0.25" fill="#9fd0ff" opacity="0.66"/><circle cx="201.3" cy="14.7" r="0.45" fill="#9fd0ff" opacity="0.29"/><circle cx="107.2" cy="113.7" r="0.30" fill="#cfe6ff" opacity="0.38"/><circle cx="53.2" cy="91.7" r="0.35" fill="#ffffff" opacity="0.52"/><circle cx="19.0" cy="127.6" r="0.30" fill="#9fd0ff" opacity="0.67"/><circle cx="142.5" cy="29.4" r="0.45" fill="#ffffff" opacity="0.33"/><circle cx="146.6" cy="97.6" r="0.45" fill="#cfe6ff" opacity="0.56"/><circle cx="109.1" cy="69.0" r="0.25" fill="#9fd0ff" opacity="0.63"/><circle cx="110.7" cy="99.8" r="0.30" fill="#ffffff" opacity="0.51"/><circle cx="172.3" cy="139.1" r="0.45" fill="#cfe6ff" opacity="0.36"/><circle cx="209.8" cy="4.4" r="0.35" fill="#9fd0ff" opacity="0.29"/><circle cx="216.9" cy="64.0" r="0.30" fill="#cfe6ff" opacity="0.46"/><circle cx="18.6" cy="14.5" r="0.45" fill="#ffffff" opacity="0.39"/><circle cx="31.4" cy="115.2" r="0.45" fill="#cfe6ff" opacity="0.40"/><circle cx="158.1" cy="33.9" r="0.35" fill="#cfe6ff" opacity="0.47"/><circle cx="2.8" cy="69.9" r="0.35" fill="#9fd0ff" opacity="0.47"/><circle cx="33.2" cy="49.5" r="0.30" fill="#ffffff" opacity="0.32"/><circle cx="2.4" cy="105.6" r="0.35" fill="#cfe6ff" opacity="0.32"/><circle cx="160.3" cy="126.4" r="0.30" fill="#cfe6ff" opacity="0.39"/><circle cx="89.2" cy="139.8" r="0.45" fill="#ffffff" opacity="0.29"/><circle cx="169.8" cy="119.9" r="0.30" fill="#9fd0ff" opacity="0.31"/></g>
</svg>
<div class="abs" id="dlg-title">琴洛音频资源网精选插件包<b>(32Bit)</b></div>
<div class="abs" id="dlg-line"></div>
<div class="abs" id="dlg-sub">琴洛音频资源网</div>
<div class="abs" id="dlg-btn">安装</div>
<div class="abs" id="dlg-qq">2720665239</div>
<svg class="abs" style="left:200px;top:4px" width="24" height="10" viewBox="0 0 24 10"><defs><radialGradient id="dg"><stop offset="0" stop-color="#ececec"/><stop offset=".7" stop-color="#dcdcdc"/><stop offset="1" stop-color="#c4c4c4"/></radialGradient></defs><circle cx="7.300" cy="5" r="3.300" fill="url(#dg)"/><circle cx="17" cy="5" r="3.300" fill="url(#dg)"/></svg>
</div>
</body>
</html>
